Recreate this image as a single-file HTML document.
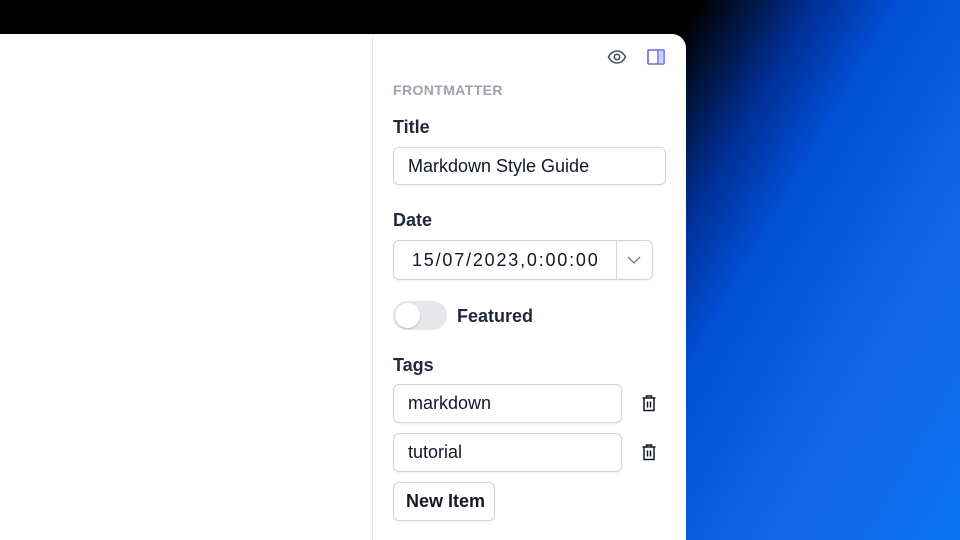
<!DOCTYPE html>
<html><head><meta charset="utf-8"><style>
*{box-sizing:border-box;margin:0;padding:0}
html,body{width:960px;height:540px;overflow:hidden}
body{position:relative;font-family:"Liberation Sans",sans-serif;
background:linear-gradient(120deg,#000 0%,#000 55%,#00153f 59%,#002f95 64%,#0050d6 71%,#1565e8 85%,#0a74f4 100%);}
.win{position:absolute;left:0;top:34px;width:686px;height:506px;background:#fff;border-top-right-radius:14px}
.div{position:absolute;left:372px;top:34px;width:1px;height:506px;background:#e5e7eb}
.t{position:absolute;color:#111827}
.lbl{font-size:18px;font-weight:bold;color:#1f2937}
.inp{position:absolute;border:1px solid #d1d5db;border-radius:6px;background:#fff;font-size:18px;color:#111827;padding-left:14px;display:flex;align-items:center;box-shadow:0 1px 2px rgba(0,0,0,.06)}
</style></head><body>
<div class="win"></div>
<div class="div"></div>
<svg style="position:absolute;left:607px;top:49px" width="20" height="16" viewBox="0 0 20 16"><path d="M1.5 8C3.5 4 6.5 2 10 2s6.5 2 8.5 6c-2 4-5 6-8.5 6S3.5 12 1.5 8z" fill="none" stroke="#4b5563" stroke-width="1.6"/><circle cx="10" cy="8" r="2.7" fill="none" stroke="#4b5563" stroke-width="1.6"/></svg>
<svg style="position:absolute;left:647px;top:49px" width="18" height="16" viewBox="0 0 18 16"><rect x="1" y="1" width="16" height="14" rx="1" fill="none" stroke="#6366f1" stroke-width="1.6"/><line x1="11" y1="1" x2="11" y2="15" stroke="#6366f1" stroke-width="1.6"/><rect x="11.5" y="1.5" width="5" height="13" fill="#c7d2fe"/></svg>
<div class="t" style="left:393px;top:82px;font-size:14px;font-weight:bold;color:#9ca3af;letter-spacing:.4px">FRONTMATTER</div>
<div class="t lbl" style="left:393px;top:117px">Title</div>
<div class="inp" style="left:393px;top:147px;width:273px;height:38px">Markdown Style Guide</div>
<div class="t lbl" style="left:393px;top:210px">Date</div>
<div class="inp" style="left:393px;top:240px;width:260px;height:40px;padding-left:18px;letter-spacing:1.8px">15/07/2023,0:00:00</div>
<div style="position:absolute;left:616px;top:241px;width:1px;height:38px;background:#d1d5db"></div>
<svg style="position:absolute;left:627px;top:255px" width="14" height="10" viewBox="0 0 14 10"><path d="M1 2l6 6 6-6" fill="none" stroke="#6b7280" stroke-width="1.3"/></svg>
<div style="position:absolute;left:393px;top:301px;width:54px;height:29px;border-radius:15px;background:#e5e7eb"></div>
<div style="position:absolute;left:395px;top:303px;width:25px;height:25px;border-radius:50%;background:#fff;box-shadow:0 1px 2px rgba(0,0,0,.2)"></div>
<div class="t lbl" style="left:457px;top:306px">Featured</div>
<div class="t lbl" style="left:393px;top:355px">Tags</div>
<div class="inp" style="left:393px;top:384px;width:229px;height:39px">markdown</div>
<div class="inp" style="left:393px;top:433px;width:229px;height:39px">tutorial</div>
<svg style="position:absolute;left:641px;top:394px" width="16" height="18" viewBox="0 0 16 18"><path d="M1.5 4h13M5.5 4V2h5v2M3 4v12.5h10V4M6.5 7.5v6M9.5 7.5v6" fill="none" stroke="#111827" stroke-width="1.5"/></svg>
<svg style="position:absolute;left:641px;top:443px" width="16" height="18" viewBox="0 0 16 18"><path d="M1.5 4h13M5.5 4V2h5v2M3 4v12.5h10V4M6.5 7.5v6M9.5 7.5v6" fill="none" stroke="#111827" stroke-width="1.5"/></svg>
<div class="inp" style="left:393px;top:482px;width:102px;height:39px;font-weight:bold;padding-left:12px">New Item</div>
</body></html>
